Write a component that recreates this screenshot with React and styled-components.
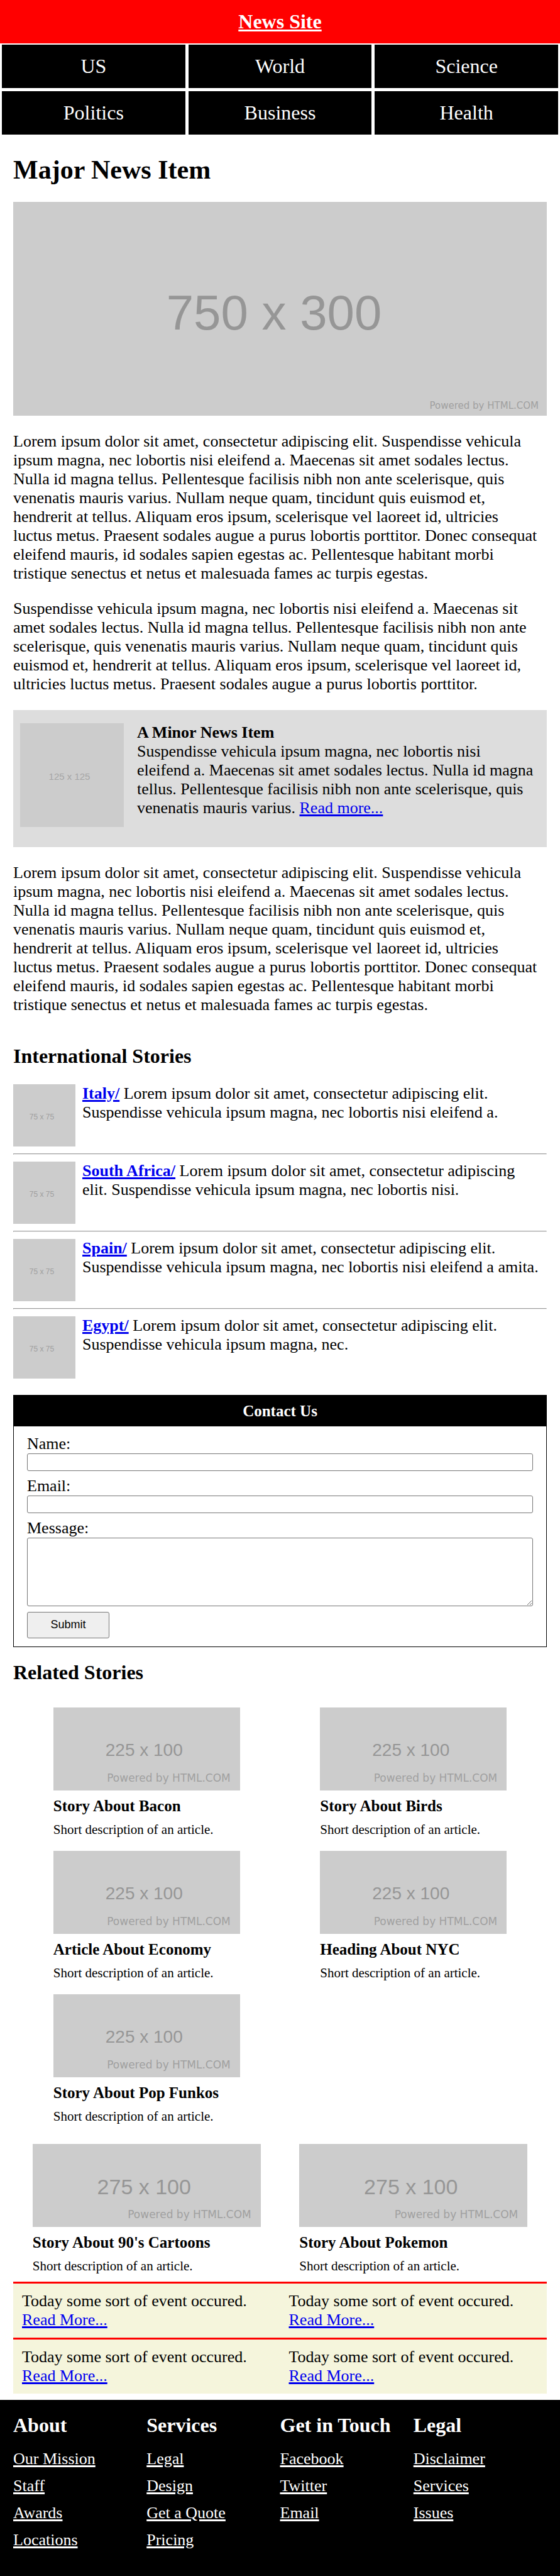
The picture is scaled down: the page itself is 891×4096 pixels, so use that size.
import React from "react";
import styled, { createGlobalStyle } from "styled-components";

const GlobalStyle = createGlobalStyle`
  *, *::before, *::after { box-sizing: border-box; }
  body {
    margin: 0;
    background: #fff;
    color: #000;
    font-family: "Liberation Serif", "Times New Roman", serif;
    font-size: 26px;
    line-height: 30px;
  }
  h1, h2, h3, p, ul { margin: 0; padding: 0; }
  ul { list-style: none; }
  a {
    color: #0000ee;
    text-decoration: underline;
    text-decoration-thickness: 3px;
    text-underline-offset: 2px;
  }
`;

const Masthead = styled.header`
  background: #f00;
  padding: 16px;
  text-align: center;
  font-size: 32px;
  font-weight: bold;
  line-height: 37px;
  a { color: #fff; }
`;

const Nav = styled.nav`
  display: grid;
  grid-template-columns: repeat(3, 1fr);
  gap: 5px;
  padding: 2px 3px;
`;

const NavLink = styled.a`
  background: #000;
  color: #fff;
  padding: 16px;
  text-align: center;
  text-decoration: none;
  font-size: 32px;
  line-height: 37px;
`;

const Main = styled.main`
  padding: 30px 21px 10px;
`;

const Title = styled.h1`
  font-size: 42px;
  line-height: 48px;
  margin-bottom: 27px;
`;

const Heading = styled.h2`
  font-size: 32px;
  line-height: 36px;
`;

const SectionHeading = styled(Heading)`
  margin: ${(p) => p.$space};
`;

const Picture = styled.div`
  position: relative;
  flex: none;
  width: ${(p) => p.$width || "100%"};
  aspect-ratio: ${(p) => p.$ratio};
  padding: ${(p) => (p.$large ? "12px 19px 0 0" : "5px 8px 0 0")};
  background: #ccc;
  color: ${(p) => p.$tone || "#969696"};
  display: flex;
  align-items: center;
  justify-content: center;
  font-family: "Liberation Sans", Arial, sans-serif;
  font-size: ${(p) => p.$size};
  line-height: 1;
`;

const Credit = styled.span`
  position: absolute;
  right: ${(p) => (p.$large ? "13px" : "15px")};
  bottom: ${(p) => (p.$large ? "6px" : "10px")};
  font-family: "DejaVu Sans", sans-serif;
  font-size: ${(p) => (p.$large ? "15px" : "17px")};
  line-height: 20px;
  color: #a0a0a0;
`;

const Paragraph = styled.p`
  margin-top: 26px;
  padding-right: 10px;
`;

const Minor = styled.aside`
  display: flex;
  align-items: flex-start;
  gap: 21px;
  margin-top: 26px;
  padding: 21px 19px 32px 11px;
  background: #ddd;
`;

const Story = styled.li`
  display: flex;
  align-items: flex-start;
  gap: 11px;
  padding-right: 10px;
  a { font-weight: bold; }
`;

const Rule = styled.hr`
  margin: 11px 0;
  border: 1px solid #ededed;
  border-top-color: #9a9a9a;
  border-left-color: #9a9a9a;
`;

const Contact = styled.form`
  margin-top: 26px;
  border: 1px solid #000;
`;

const ContactTitle = styled.h3`
  background: #000;
  color: #fff;
  padding: 10px;
  text-align: center;
  font-size: 25px;
  line-height: 29px;
`;

const Fields = styled.div`
  padding: 13px 21px;
`;

const Field = styled.div`
  margin-bottom: 9px;
  label { display: block; }
`;

const TextInput = styled.input`
  display: block;
  width: 100%;
  height: 28px;
  border: 1px solid #767676;
  border-radius: 3px;
  background: #fff;
  font: 18px "Liberation Sans", Arial, sans-serif;
`;

const MessageBox = styled.textarea`
  display: block;
  width: 100%;
  height: 109px;
  border: 1px solid #767676;
  border-radius: 3px;
  background: #fff;
  font: 18px "Liberation Sans", Arial, sans-serif;
`;

const Submit = styled.button`
  display: block;
  width: 131px;
  height: 42px;
  border: 1px solid #767676;
  border-radius: 3px;
  background: #efefef;
  color: #000;
  font: 18px "Liberation Sans", Arial, sans-serif;
`;

const Cards = styled.div`
  display: grid;
  grid-template-columns: repeat(2, 1fr);
  justify-items: center;
  row-gap: 22px;
  margin-top: ${(p) => p.$top};
`;

const Card = styled.article`
  width: ${(p) => p.$width};
`;

const CardTitle = styled.h3`
  margin: 11px 0;
  font-size: 25px;
  line-height: 28px;
`;

const CardText = styled.p`
  font-size: 21px;
  line-height: 24px;
`;

const Events = styled.div`
  display: grid;
  grid-template-columns: repeat(2, 1fr);
  margin-top: 13px;
  background: #f5f5dc;
`;

const Event = styled.p`
  padding: 13px 14px;
  border-top: 3px solid #f00;
  a { display: table; }
`;

const Footer = styled.footer`
  display: grid;
  grid-template-columns: repeat(4, 1fr);
  padding: 22px 21px 42px;
  background: #000;
  color: #fff;
`;

const FooterLinks = styled.ul`
  display: grid;
  gap: 13px;
  margin-top: 21px;
  a { color: #fff; }
`;

const LONG =
  "Lorem ipsum dolor sit amet, consectetur adipiscing elit. Suspendisse vehicula ipsum magna, nec lobortis nisi eleifend a. Maecenas sit amet sodales lectus. Nulla id magna tellus. Pellentesque facilisis nibh non ante scelerisque, quis venenatis mauris varius. Nullam neque quam, tincidunt quis euismod et, hendrerit at tellus. Aliquam eros ipsum, scelerisque vel laoreet id, ultricies luctus metus. Praesent sodales augue a purus lobortis porttitor. Donec consequat eleifend mauris, id sodales sapien egestas ac. Pellentesque habitant morbi tristique senectus et netus et malesuada fames ac turpis egestas.";

const SHORT =
  "Suspendisse vehicula ipsum magna, nec lobortis nisi eleifend a. Maecenas sit amet sodales lectus. Nulla id magna tellus. Pellentesque facilisis nibh non ante scelerisque, quis venenatis mauris varius. Nullam neque quam, tincidunt quis euismod et, hendrerit at tellus. Aliquam eros ipsum, scelerisque vel laoreet id, ultricies luctus metus. Praesent sodales augue a purus lobortis porttitor.";

const SECTIONS = ["US", "World", "Science", "Politics", "Business", "Health"];

const STORIES = [
  ["Italy/", "Lorem ipsum dolor sit amet, consectetur adipiscing elit. Suspendisse vehicula ipsum magna, nec lobortis nisi eleifend a."],
  ["South Africa/", "Lorem ipsum dolor sit amet, consectetur adipiscing elit. Suspendisse vehicula ipsum magna, nec lobortis nisi."],
  ["Spain/", "Lorem ipsum dolor sit amet, consectetur adipiscing elit. Suspendisse vehicula ipsum magna, nec lobortis nisi eleifend a amita."],
  ["Egypt/", "Lorem ipsum dolor sit amet, consectetur adipiscing elit. Suspendisse vehicula ipsum magna, nec."],
];

const RELATED = [
  "Story About Bacon",
  "Story About Birds",
  "Article About Economy",
  "Heading About NYC",
  "Story About Pop Funkos",
];

const WIDE = ["Story About 90's Cartoons", "Story About Pokemon"];

const FOOTER = [
  ["About", ["Our Mission", "Staff", "Awards", "Locations"]],
  ["Services", ["Legal", "Design", "Get a Quote", "Pricing"]],
  ["Get in Touch", ["Facebook", "Twitter", "Email"]],
  ["Legal", ["Disclaimer", "Services", "Issues"]],
];

function StoryCard({ title, width, ratio, label, size }) {
  return (
    <Card $width={width}>
      <Picture $ratio={ratio} $size={size}>
        {label}
        <Credit>Powered by HTML.COM</Credit>
      </Picture>
      <CardTitle>{title}</CardTitle>
      <CardText>Short description of an article.</CardText>
    </Card>
  );
}

export default function App() {
  return (
    <>
      <GlobalStyle />
      <Masthead><a href="#home">News Site</a></Masthead>
      <Nav>
        {SECTIONS.map((s) => <NavLink key={s} href={`#${s}`}>{s}</NavLink>)}
      </Nav>
      <Main>
        <Title>Major News Item</Title>
        <Picture $large $ratio="750 / 300" $size="78px">
          750 x 300
          <Credit $large>Powered by HTML.COM</Credit>
        </Picture>
        <Paragraph>{LONG}</Paragraph>
        <Paragraph>{SHORT}</Paragraph>
        <Minor>
          <Picture $width="165px" $ratio="1" $size="15px" $tone="#a6a6a6">125 x 125</Picture>
          <p>
            <strong>A Minor News Item</strong>
            <br />
            Suspendisse vehicula ipsum magna, nec lobortis nisi eleifend a. Maecenas sit amet
            sodales lectus. Nulla id magna tellus. Pellentesque facilisis nibh non ante
            scelerisque, quis venenatis mauris varius. <a href="#minor">Read more...</a>
          </p>
        </Minor>
        <Paragraph>{LONG}</Paragraph>

        <SectionHeading $space="48px 0 27px">International Stories</SectionHeading>
        <ul>
          {STORIES.map(([place, text], i) => (
            <React.Fragment key={place}>
              {i > 0 && <li role="separator"><Rule /></li>}
              <Story>
                <Picture $width="99px" $ratio="1" $size="12px" $tone="#a0a0a0">75 x 75</Picture>
                <p><a href={`#${place}`}>{place}</a> {text}</p>
              </Story>
            </React.Fragment>
          ))}
        </ul>

        <Contact>
          <ContactTitle>Contact Us</ContactTitle>
          <Fields>
            <Field>
              <label htmlFor="name">Name:</label>
              <TextInput id="name" type="text" />
            </Field>
            <Field>
              <label htmlFor="email">Email:</label>
              <TextInput id="email" type="email" />
            </Field>
            <Field>
              <label htmlFor="message">Message:</label>
              <MessageBox id="message" />
            </Field>
            <Submit type="button">Submit</Submit>
          </Fields>
        </Contact>

        <SectionHeading $space="22px 0 0">Related Stories</SectionHeading>
        <Cards $top="38px">
          {RELATED.map((t) => (
            <StoryCard key={t} title={t} width="297px" ratio="225 / 100" label="225 x 100" size="28px" />
          ))}
        </Cards>
        <Cards $top="32px">
          {WIDE.map((t) => (
            <StoryCard key={t} title={t} width="363px" ratio="275 / 100" label="275 x 100" size="34px" />
          ))}
        </Cards>
        <Events>
          {[1, 2, 3, 4].map((n) => (
            <Event key={n}>
              Today some sort of event occured. <a href={`#event-${n}`}>Read More...</a>
            </Event>
          ))}
        </Events>
      </Main>
      <Footer>
        {FOOTER.map(([title, links]) => (
          <section key={title}>
            <Heading>{title}</Heading>
            <FooterLinks>
              {links.map((l) => <li key={l}><a href={`#${l}`}>{l}</a></li>)}
            </FooterLinks>
          </section>
        ))}
      </Footer>
    </>
  );
}
